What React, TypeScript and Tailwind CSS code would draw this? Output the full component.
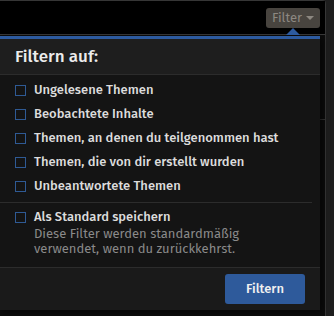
import React from "react";

const options = [
  "Ungelesene Themen",
  "Beobachtete Inhalte",
  "Themen, an denen du teilgenommen hast",
  "Themen, die von dir erstellt wurden",
  "Unbeantwortete Themen",
];

function Box() {
  return <span className="block h-[11px] w-[11px] shrink-0 border border-[#2f5a94]" />;
}

export default function App() {
  return (
    <div
      className="relative h-[316px] w-[334px] overflow-hidden bg-[#1e1e1e]"
      style={{ fontFamily: '"Fira Sans", "Noto Sans", sans-serif' }}
    >
      <div className="flex h-full w-[326px] flex-col rounded-tr-[4px] border-r border-t border-[#363636] bg-[#0c0c0c]">
        <div className="flex h-[34px] items-start justify-end border-b border-[#3a3a3a] bg-black pr-[5px] pt-[7px]">
          <button className="flex h-[20px] w-[54px] items-center justify-center gap-[4px] rounded-[3px] bg-[#48443f] text-[13px] text-[#8d8881]">
            Filter
            <span className="h-0 w-0 border-x-[4px] border-t-[4px] border-x-transparent border-t-[#8d8881]" />
          </button>
        </div>
        <div className="mt-[84px] ml-auto w-[6px] border-t border-[#333]" />
      </div>

      <div className="absolute left-0 top-[36px] w-[320px] shadow-[2px_2px_6px_rgba(0,0,0,0.6)]">
        <span className="absolute -top-[8px] left-[286px] h-0 w-0 border-x-[7px] border-b-[7px] border-x-transparent border-b-[#2d5ba0]" />
        <div className="border-t-[3px] border-[#2d5ba0]">
          <div className="flex h-[36px] items-center border-b border-[#2c2c2c] bg-[#1e1e1e] px-[15px] pt-[1px] text-[17px] font-medium text-[#ececec]">
            Filtern auf:
          </div>
          <div className="bg-[#141414]">
            <div className="pb-[4px] pt-[3px]">
              {options.map((o) => (
                <label key={o} className="flex h-[24px] items-center gap-[8px] px-[15px] text-[13px] font-medium text-[#dcdcdc]">
                  <Box />
                  {o}
                </label>
              ))}
            </div>
            <div className="mr-[8px] border-t border-[#2c2c2c]" />
            <div className="flex gap-[8px] px-[15px] pb-[11px] pt-[7px]">
              <div className="pt-[2px]">
                <Box />
              </div>
              <div>
                <div className="text-[13px] font-medium leading-[14px] text-[#dcdcdc]">Als Standard speichern</div>
                <div className="mt-[2px] text-[13px] leading-[15px] text-[#8a8a8a]">
                  Diese Filter werden standardmäßig
                  <br />
                  verwendet, wenn du zurückkehrst.
                </div>
              </div>
            </div>
          </div>
          <div className="flex h-[43px] items-center justify-end border-t border-[#2c2c2c] bg-[#1a1a1a] px-[15px]">
            <button className="h-[30px] w-[80px] rounded-[3px] bg-[#2e5a9b] text-[13px] font-medium text-[#f0f0f0]">
              Filtern
            </button>
          </div>
        </div>
      </div>
    </div>
  );
}
